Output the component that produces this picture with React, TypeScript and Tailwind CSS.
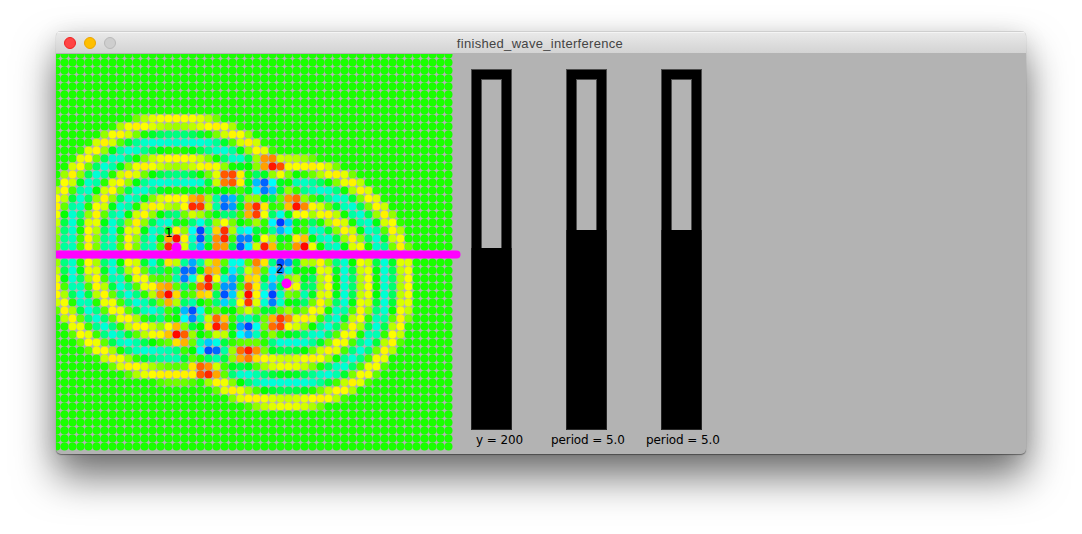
const CELL = 8;
const COUNT = 50;
const PERIOD = 5;

type Source = { x: number; y: number; reach: number };

const SOURCES: Source[] = [
  { x: 15, y: 24.125, reach: 17.17 },
  { x: 28.75, y: 28.625, reach: 16.23 },
];

function waveAt(s: Source, i: number, j: number) {
  const d = Math.hypot(i - s.x, j - s.y);
  return d < s.reach ? Math.sin((2 * Math.PI * (s.reach - d)) / PERIOD) : 0;
}

function colorAt(i: number, j: number) {
  const v = SOURCES.reduce((sum, s) => sum + waveAt(s, i, j), 0);
  return `hsl(${(114 - 57 * v).toFixed(1)} 100% 50%)`;
}

const DOTS = Array.from({ length: COUNT * COUNT }, (_, k) => ({
  i: k % COUNT,
  j: Math.floor(k / COUNT),
}));

function WaveField() {
  return (
    <svg width="406" height="400" viewBox="0 0 406 400" className="block shrink-0 overflow-hidden">
      <g transform="translate(0.5 0.5)">
        {DOTS.map(({ i, j }) => (
          <circle key={`${i}-${j}`} cx={i * CELL} cy={j * CELL} r={4} fill={colorAt(i, j)} />
        ))}
        <circle cx={120} cy={193} r={5} fill="#ff00ff" />
        <circle cx={230} cy={229} r={5} fill="#ff00ff" />
        <line x1={0} y1={200} x2={400} y2={200} stroke="#ff00ff" strokeWidth={8} strokeLinecap="round" />
      </g>
      <text x="109" y="183" fontSize="12" fontFamily="DejaVu Sans, sans-serif">1</text>
      <text x="220" y="219" fontSize="12" fontFamily="DejaVu Sans, sans-serif">2</text>
    </svg>
  );
}

function Slider({ label, gap, shift }: { label: string; gap: number; shift: string }) {
  return (
    <div className="flex w-[95px] shrink-0 flex-col pt-[15px]">
      <div className="flex h-[361px] w-[41px] flex-col bg-black">
        <div
          className="shrink-0 border-x border-t border-[#4d4d4d] px-[9px] pt-[9px]"
          style={{ height: gap + 10 }}
        >
          <div className="h-full border border-b-0 border-[#4d4d4d] bg-[#b3b3b3]" />
        </div>
        <div className="flex-1 border-x border-b border-[#262626]" />
      </div>
      <div className={`h-[16px] whitespace-pre text-[12px] leading-[16px] tracking-[-0.1px] text-black ${shift}`}>
        {label}
      </div>
    </div>
  );
}

export default function App() {
  return (
    <div className="h-[534px] w-[1082px] overflow-hidden bg-white pl-[56px] pt-[31px]">
      <div className="flex h-[423px] w-[970px] flex-col overflow-hidden rounded-[5px] bg-[#b3b3b3] shadow-[0_1px_1px_rgba(0,0,0,0.4),0_23px_40px_rgba(0,0,0,0.55),0_4px_24px_rgba(0,0,0,0.1)]">
        <header className="flex h-[23px] shrink-0 items-center border-b border-[#b3b3b3] bg-linear-to-b from-[#ebebeb] to-[#d3d3d3] pl-[8px] shadow-[inset_0_1px_0_#cfcfcf,inset_0_2px_0_#f4f4f4]">
          <div className="flex w-[120px] gap-[8px] pt-px">
            <span className="size-[12px] rounded-full border border-[#f02020] bg-[#ff4444]" />
            <span className="size-[12px] rounded-full border border-[#eca500] bg-[#ffbf00]" />
            <span className="size-[12px] rounded-full border border-[#b9b9b9] bg-[#cecece]" />
          </div>
          <h1 className="flex-1 pr-[130px] pt-[3px] text-center font-['Liberation_Sans',sans-serif] text-[13px] leading-[18px] tracking-[0.31px] text-[#444444]">
            finished_wave_interference
          </h1>
        </header>
        <main className="flex h-[400px] font-['DejaVu_Sans',sans-serif]">
          <WaveField />
          <div className="flex pl-[9px]">
            <Slider label="y = 200" gap={169} shift="pl-[5px] pt-[2px]" />
            <Slider label="period = 5.0" gap={151} shift="-ml-[15px] pt-[2px]" />
            <Slider label="period = 5.0" gap={151} shift="-ml-[15px] pt-[2px]" />
          </div>
        </main>
      </div>
    </div>
  );
}
